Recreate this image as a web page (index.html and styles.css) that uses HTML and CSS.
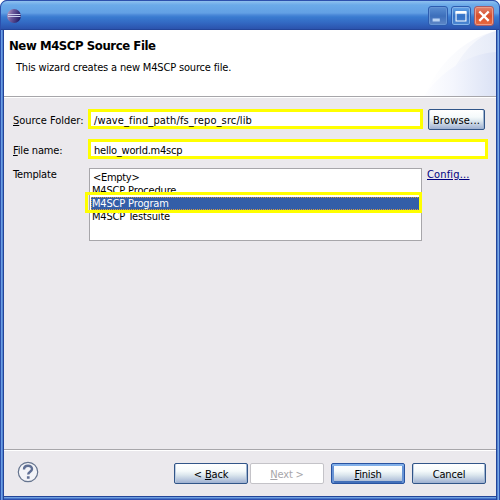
FILE: index.html
```
<!DOCTYPE html>
<html lang="en">
<head>
<meta charset="utf-8">
<title>New M4SCP Source File</title>
<link rel="stylesheet" href="styles.css">
</head>
<body>
<div class="window">
  <div class="titlebar">
    <svg class="app-icon" width="14" height="14" viewBox="0 0 14 14">
      <defs><linearGradient id="orb" x1="0" y1="0" x2="1" y2="0.3"><stop offset="0" stop-color="#c5a9c7"/><stop offset=".45" stop-color="#6d5b9d"/><stop offset="1" stop-color="#27206b"/></linearGradient></defs>
      <circle cx="7" cy="7" r="6.9" fill="url(#orb)"/>
      <path d="M1 5.5H13.5M1 7.5H13.5" stroke="#c9cfee"/>
    </svg>
    <div class="controls">
      <svg class="control min" viewBox="0 0 20 20"><path d="M4 14.5H12" stroke="#b9d3f4" stroke-width="3.2"/></svg>
      <svg class="control max" viewBox="0 0 20 20"><path d="M4.5 5V15.5H15.5V5" fill="none" stroke="#fff" stroke-width="1.2"/><path d="M4 6H16" stroke="#fff" stroke-width="3"/></svg>
      <svg class="control close" viewBox="0 0 20 20"><path d="M4.8 5L15.2 15.4M15.2 5L4.8 15.4" stroke="#fff" stroke-width="2.6"/></svg>
    </div>
  </div>
  <div class="client">
    <header class="banner">
      <svg class="swoosh" width="76" height="66" viewBox="0 0 76 66">
        <defs>
          <linearGradient id="s1"><stop offset="0" stop-color="#fff"/><stop offset=".5" stop-color="#f9fafd"/><stop offset="1" stop-color="#f3f5fc"/></linearGradient>
          <linearGradient id="s3"><stop offset="0" stop-color="#f4f6fc"/><stop offset="1" stop-color="#e6ebf8"/></linearGradient>
          <linearGradient id="s2"><stop offset="0" stop-color="#fefeff"/><stop offset=".4" stop-color="#f4f6fd"/><stop offset="1" stop-color="#dbe2f5"/></linearGradient>
        </defs>
        <path d="M4 66C18 35 42 9 76 1V66Z" fill="url(#s1)"/>
        <path d="M33 40C46 18 58 6 76 1V40Z" fill="url(#s3)"/>
        <path d="M4 66C20 43 46 24 76 22V66Z" fill="url(#s2)"/>
      </svg>
      <h1>New M4SCP Source File</h1>
      <p>This wizard creates a new M4SCP source file.</p>
    </header>
    <main class="form">
      <div class="row source">
        <span class="caption"><u>S</u>ource Folder:</span>
        <div class="field folder" contenteditable="true" spellcheck="false">/wave_find_path/fs_repo_src/lib</div>
        <button class="btn browse">Browse...</button>
      </div>
      <div class="row file">
        <span class="caption"><u>F</u>ile name:</span>
        <div class="field name" contenteditable="true" spellcheck="false">hello_world.m4scp</div>
      </div>
      <div class="row template">
        <span class="label">Template</span>
        <div class="list">
          <div class="item first">&lt;Empty&gt;</div>
          <div class="item procedure">M4SCP Procedure</div>
          <div class="item selected">M4SCP Program</div>
          <div class="item suite">M4SCP Testsuite</div>
          <div class="highlight"></div>
        </div>
        <a class="config">Config...</a>
      </div>
    </main>
    <footer class="actions">
      <svg class="help" width="22" height="22" viewBox="0 0 22 22">
        <circle cx="11" cy="11" r="9.7" fill="#f2f3f7" stroke="#66758f" stroke-width="1.2"/>
        <path d="M7 8.5C7 3.5 15 3.7 15 8C15 10.8 11.2 10.6 11.2 13.6" fill="none" stroke="#5f6f94" stroke-width="2.4"/>
        <path d="M9.9 15.2H12.6V17.8H9.9Z" fill="#5f6f94"/>
      </svg>
      <button class="btn back">&lt; <u>B</u>ack</button>
      <button class="btn next" disabled><u>N</u>ext &gt;</button>
      <button class="btn finish"><u>F</u>inish</button>
      <button class="btn cancel">Cancel</button>
    </footer>
  </div>
</div>
</body>
</html>
```
FILE: styles.css
```
* { box-sizing: border-box; }
body { margin: 0; background: #fff; font: 11px/13px "DejaVu Sans Condensed", "DejaVu Sans", sans-serif; font-stretch: condensed; color: #000; letter-spacing: -0.17px; overflow: hidden; }
.window { width: 500px; height: 500px; padding: 0 4px 4px; border-radius: 7px 7px 0 0; overflow: hidden; background: linear-gradient(90deg, #2c50ad 0 1px, #6a9ee3 1px 2px, #5383d2 2px 3px, #234599 3px 4px, transparent 4px 496px, #234599 496px 497px, #5383d2 497px 498px, #79a9e5 498px 499px, #2c50ad 499px), linear-gradient(#234599 0 497px, #6f9fdf 497px 498px, #4774c9 498px 499px, #2c50ad 499px); }
.titlebar { height: 30px; margin: 0 -4px; display: flex; justify-content: space-between; border: 1px solid #2c50ad; border-bottom-color: #234599; border-radius: 7px 7px 0 0; padding: 0 5px 0 6px; background: linear-gradient(#8fc1ef 0, #6baae9 4px, #62a0e4 12px, #4a88d8 14px, #397bd0 16px, #3268c2 22px, #2b53ad 28px); }
.app-icon { margin-top: 8px; }
.controls { display: flex; gap: 3px; padding-top: 5px; }
.control { width: 20px; height: 20px; overflow: visible; border-radius: 3px; border: 1px solid #2d5caf; box-shadow: inset 0 0 0 1px #86b4e9; }
.min { background: linear-gradient(#5b8fd3, #3d6fbb 50%, #5f87c6); box-shadow: inset 0 0 0 1px #6695d4; }
.max { background: linear-gradient(#65a5e8, #3472c7 50%, #4d87d2); }
.close { background: linear-gradient(#df8370, #d9502c 50%, #e86b40); border-color: #a95b66; box-shadow: inset 0 0 0 1px #ec9d86; }
.client { height: 466px; background: #ebe9ed; display: flex; flex-direction: column; }
.banner { position: relative; height: 67px; background: #fff; border-bottom: 1px solid #a7a6aa; padding: 9px 0 0 5px; box-shadow: 0 1px #fff; }
.banner h1 { margin: 0; font: bold 13px/14px "DejaVu Sans Condensed", "DejaVu Sans", sans-serif; font-stretch: condensed; letter-spacing: -0.42px; }
.banner p { margin: 8px 0 0 7px; }
.swoosh { position: absolute; right: 0; top: 0; }
.form { height: 352px; padding: 12px 8px 0 9px; }
.row { display: flex; align-items: flex-start; }
.caption, .row .label { width: 75px; flex: none; padding-top: 5px; white-space: nowrap; }
.source .caption { letter-spacing: -0.02px; }
.field { height: 20px; padding: 2px 3px 0; border: 3px solid #ff0; background: #fff; white-space: nowrap; outline: 0; }
.folder { width: 335px; letter-spacing: 0.12px; }
.name { width: 400px; letter-spacing: -0.22px; }
.file { margin-top: 9px; }
.template { margin-top: 9px; }
.row .label { padding-top: 0; width: 76px; }
.list { position: relative; width: 333px; height: 73px; border: 1px solid #a7a6aa; background: #fff; padding: 2px 1px; }
.item { height: 13px; padding-left: 1px; }
.item.first { padding-left: 2px; letter-spacing: -0.3px; }
.selected { background: #335ea8; color: #fff; outline: 1px dotted #d59b43; outline-offset: -1px; }
.highlight { position: absolute; left: -5px; top: 23px; width: 337px; height: 21px; border: 3px solid #ff0; }
.config { color: #000080; text-decoration: underline; margin-left: 5px; letter-spacing: 0.15px; }
u { text-underline-offset: 1px; }
.btn { height: 21px; margin: 0; padding: 1px 0 0; border: 1px solid #315588; border-radius: 2px; background: linear-gradient(#fff 0, #f5fafb 7px, #dce7ee 11px, #b6c5dc 16px, #9eb0d0); box-shadow: inset 1px 0 #bdcde1, inset -1px 0 #9eb5d2; font: inherit; letter-spacing: inherit; color: #000; }
.browse { width: 57px; margin-left: 5px; letter-spacing: 0.2px; }
.actions { flex: 1; display: flex; border-top: 1px solid #a7a6aa; box-shadow: inset 0 1px #fff; padding: 13px 10px 0 13px; }
.help { margin: -2px 135px 0 0; flex: none; }
.actions .btn { width: 74px; flex: none; }
.next { margin-left: 2px; }
.actions .next { color: #a7a6aa; background: #fff; border-color: #c4c3c8; box-shadow: none; }
.finish { margin-left: 7px; }
.actions .finish { border-color: #2853a1; box-shadow: inset 0 2px #82b0e9, inset 2px 0 #6793d5, inset -2px 0 #6793d5, inset 0 -2px #426fb9; }
.cancel { margin-left: 7px; }
```
